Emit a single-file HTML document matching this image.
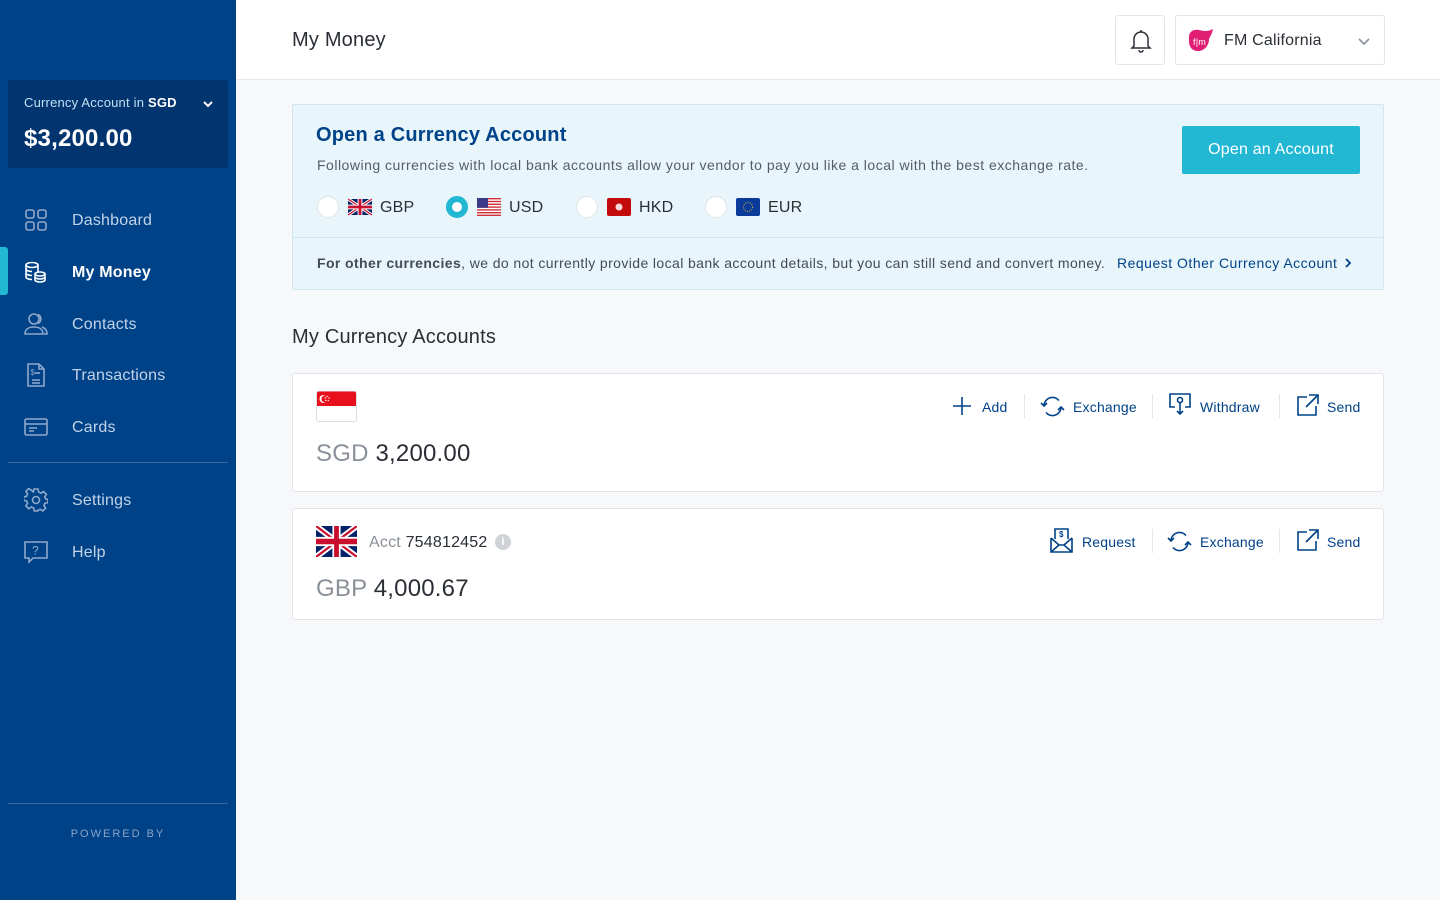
<!DOCTYPE html>
<html><head><meta charset="utf-8"><style>
*{box-sizing:border-box;margin:0;padding:0}
body{width:1440px;height:900px;font-family:"Liberation Sans",sans-serif;background:#f7f8fa;position:relative;overflow:hidden;color:#2a2f36;letter-spacing:.2px}
.sb{position:absolute;left:0;top:0;width:236px;height:900px;background:#004288}
.acc{position:absolute;left:8px;top:80px;width:220px;height:88px;background:#023570;border-radius:3px}
.acc .l{position:absolute;left:16px;top:15px;font-size:13px;color:#bfe0f2}
.acc .l b{color:#fff;font-weight:bold}
.acc .v{position:absolute;left:16px;top:45px;font-size:24px;color:#fff;font-weight:bold}
.nav{position:absolute;left:0;width:236px;height:50px;font-size:16px;color:#c2d3e8}
.nav span{position:absolute;left:72px;top:17px}
.nav svg{position:absolute;left:24px;top:13px}
.nav.act{color:#fff;font-weight:bold}
.nav.act:before{content:"";position:absolute;left:0;top:0;width:8px;height:48px;background:#22b7d3;border-radius:0 3px 3px 0}
.hr{position:absolute;left:8px;width:220px;height:1px;background:#3a6aa5}
.top{position:absolute;left:236px;top:0;width:1204px;height:80px;background:#fff;border-bottom:1px solid #e6e8eb}
.box{position:absolute;background:#fff;border:1px solid #e1e4e8;border-radius:3px}
.ban{position:absolute;left:292px;top:104px;width:1092px;height:186px;background:#e8f6fb;border:1px solid #d2e6ef;border-radius:2px}
.rad{position:absolute;top:91px;width:22px;height:22px;border-radius:50%;background:#fff;border:1px solid #dfe3e6}
.rad.on{background:#fff;border:6px solid #22b7d3}
.cur{position:absolute;top:94px;font-size:16px;color:#2a2f36}
.act2{position:absolute;font-size:14px;color:#004288}
.sep{position:absolute;width:1px;height:24px;background:#e5e7ea}
</style></head><body>
<div class="sb">
<div class="acc"><div class="l">Currency Account in <b>SGD</b></div>
<svg style="position:absolute;left:195px;top:21px" width="10" height="7" viewBox="0 0 10 7"><path d="M1 1l4 4 4-4" stroke="#fff" stroke-width="2" fill="none"/></svg>
<div class="v">$3,200.00</div></div>
<div class="nav" style="top:195px"><svg width="24" height="24" viewBox="0 0 24 24" fill="none" stroke="#8fa9cc" stroke-width="1.6"><rect x="2" y="2" width="8" height="8" rx="2"/><rect x="14" y="2" width="8" height="8" rx="2"/><rect x="2" y="14" width="8" height="8" rx="2"/><rect x="14" y="14" width="8" height="8" rx="2"/></svg><span>Dashboard</span></div>
<div class="nav act" style="top:247px"><svg width="24" height="24" viewBox="0 0 24 24" fill="none" stroke="#fff" stroke-width="1.6"><ellipse cx="8" cy="5" rx="6" ry="2.5"/><path d="M2 5v12c0 1.4 2.7 2.5 6 2.5M2 9c0 1.4 2.7 2.5 6 2.5M2 13c0 1.4 2.7 2.5 6 2.5M14 5v7"/><ellipse cx="16" cy="14" rx="5" ry="2"/><path d="M11 14v6c0 1.1 2.2 2 5 2s5-.9 5-2v-6M11 17c0 1.1 2.2 2 5 2s5-.9 5-2"/></svg><span style="top:17px">My Money</span></div>
<div class="nav" style="top:299px"><svg width="24" height="24" viewBox="0 0 24 24" fill="none" stroke="#8fa9cc" stroke-width="1.6"><circle cx="10" cy="7" r="5"/><path d="M1 22c0-5 4-7 9-7s9 2 9 7z"/><path d="M14 2.5a5 5 0 0 1 0 9M18 15c3 1 5 3 5 7h-3"/></svg><span>Contacts</span></div>
<div class="nav" style="top:350px"><svg width="24" height="24" viewBox="0 0 24 24" fill="none" stroke="#8fa9cc" stroke-width="1.6"><path d="M4 1h11l5 5v17H4z"/><path d="M15 1v5h5M8 17h8M8 20h8"/><text x="6.5" y="12" font-size="8" fill="#8fa9cc" stroke="none" font-family="Liberation Sans">$</text><path d="M11 10h5"/></svg><span>Transactions</span></div>
<div class="nav" style="top:402px"><svg width="24" height="24" viewBox="0 0 24 24" fill="none" stroke="#8fa9cc" stroke-width="1.6"><rect x="1" y="4" width="22" height="16" rx="1.5"/><path d="M1 9h22M5 13h8M5 16h5"/></svg><span>Cards</span></div>
<div class="hr" style="top:462px"></div>
<div class="nav" style="top:475px"><svg width="24" height="24" viewBox="0 0 24 24" fill="none" stroke="#8fa9cc" stroke-width="1.6"><circle cx="12" cy="12" r="3.5"/><path d="M10 1h4l.6 3 2.4 1.2 2.6-1.7 2.8 2.8-1.7 2.6L21.9 11l2 .4v3.2l-3 .6-1 2.4 1.7 2.6-2.8 2.8-2.6-1.7-2.4 1L13.7 23h-3.4l-.6-3-2.4-1-2.6 1.7-2.8-2.8 1.7-2.6-1-2.4-3-.6v-3.4l3-.6 1-2.4-1.7-2.6 2.8-2.8 2.6 1.7L9.4 4z"/></svg><span>Settings</span></div>
<div class="nav" style="top:527px"><svg width="24" height="24" viewBox="0 0 24 24" fill="none" stroke="#8fa9cc" stroke-width="1.6"><path d="M1 2h22v16H9l-4 4v-4H1z"/><text x="8" y="14.5" font-size="12" fill="#8fa9cc" stroke="none" font-family="Liberation Sans">?</text></svg><span>Help</span></div>
<div class="hr" style="top:803px"></div>
<div style="position:absolute;top:828px;width:236px;text-align:center;font-size:11px;letter-spacing:2px;color:#8ba3c6">POWERED BY</div>
</div>

<div class="top">
<div style="position:absolute;left:56px;top:29px;font-size:20px;color:#2a2f36">My Money</div>
<div class="box" style="left:879px;top:15px;width:50px;height:50px"><svg style="position:absolute;left:14px;top:13px" width="22" height="24" viewBox="0 0 22 24" fill="none" stroke="#2a2f36" stroke-width="1.5"><path d="M4 17V10a7 7 0 0 1 14 0v7l2 2H2z"/><path d="M11 1v2M9 21a2 2 0 0 0 4 0"/></svg></div>
<div class="box" style="left:939px;top:15px;width:210px;height:50px">
<svg style="position:absolute;left:10px;top:13px" width="28" height="24" viewBox="0 0 28 24"><path d="M3 8c0-5 4-8 10-7 5 1 8 2 14-1-1 5-3 8-4 10 0 7-5 12-11 12S3 18 3 12z" fill="#e01e74"/><text x="7" y="16" font-size="9" fill="#fff" font-family="Liberation Sans">f|m</text></svg>
<div style="position:absolute;left:48px;top:16px;font-size:16px;color:#2a2f36">FM California</div>
<svg style="position:absolute;left:182px;top:22px" width="12" height="8" viewBox="0 0 12 8"><path d="M1 1l5 5 5-5" stroke="#8a9099" stroke-width="1.6" fill="none"/></svg>
</div>
</div>

<div class="ban">
<div style="position:absolute;left:23px;top:19px;font-size:20px;font-weight:bold;color:#004288">Open a Currency Account</div>
<div style="position:absolute;left:24px;top:52px;font-size:14px;color:#555c66;letter-spacing:.5px">Following currencies with local bank accounts allow your vendor to pay you like a local with the best exchange rate.</div>
<div style="position:absolute;left:889px;top:21px;width:178px;height:48px;background:#22b7d3;border-radius:2px;color:#fff;font-size:16px;text-align:center;line-height:48px">Open an Account</div>
<div class="rad" style="left:24px"></div>
<svg style="position:absolute;left:55px;top:93px" width="24" height="18" viewBox="0 0 60 40"><rect width="60" height="40" fill="#012169"/><path d="M0 0l60 40M60 0L0 40" stroke="#fff" stroke-width="8"/><path d="M0 0l60 40M60 0L0 40" stroke="#c8102e" stroke-width="3"/><path d="M30 0v40M0 20h60" stroke="#fff" stroke-width="12"/><path d="M30 0v40M0 20h60" stroke="#c8102e" stroke-width="7"/></svg>
<div class="cur" style="left:87px">GBP</div>
<div class="rad on" style="left:153px"></div>
<svg style="position:absolute;left:184px;top:93px" width="24" height="18" viewBox="0 0 24 18"><rect width="24" height="18" rx="2" fill="#fff"/><g fill="#d0303a"><rect y="0" width="24" height="1.4"/><rect y="2.8" width="24" height="1.4"/><rect y="5.6" width="24" height="1.4"/><rect y="8.4" width="24" height="1.4"/><rect y="11.2" width="24" height="1.4"/><rect y="14" width="24" height="1.4"/><rect y="16.6" width="24" height="1.4"/></g><rect width="11" height="9.8" fill="#3b3b8a"/></svg>
<div class="cur" style="left:216px">USD</div>
<div class="rad" style="left:283px"></div>
<svg style="position:absolute;left:314px;top:93px" width="24" height="18" viewBox="0 0 24 18"><rect width="24" height="18" rx="2" fill="#c30b0b"/><circle cx="12" cy="9" r="3.5" fill="#fff" opacity=".85"/></svg>
<div class="cur" style="left:346px">HKD</div>
<div class="rad" style="left:412px"></div>
<svg style="position:absolute;left:443px;top:93px" width="24" height="18" viewBox="0 0 24 18"><rect width="24" height="18" rx="2" fill="#0a3a9a"/><circle cx="12" cy="9" r="4.5" fill="none" stroke="#d8b83a" stroke-width="1" stroke-dasharray="1 1.3"/></svg>
<div class="cur" style="left:475px">EUR</div>
<div style="position:absolute;left:0;top:132px;width:1090px;height:1px;background:#d2e6ef"></div>
<div style="position:absolute;left:24px;top:150px;font-size:14px;color:#444b55;letter-spacing:.4px"><b>For other currencies</b>, we do not currently provide local bank account details, but you can still send and convert money.</div>
<div style="position:absolute;left:824px;top:150px;font-size:14px;color:#004288;letter-spacing:.5px">Request Other Currency Account</div>
<svg style="position:absolute;left:1051px;top:152px" width="8" height="12" viewBox="0 0 8 12"><path d="M2 2l4 4-4 4" stroke="#004288" stroke-width="1.8" fill="none"/></svg>
</div>

<div style="position:absolute;left:292px;top:326px;font-size:20px;color:#2a2f36">My Currency Accounts</div>

<div class="box" style="left:292px;top:373px;width:1092px;height:119px">
<svg style="position:absolute;left:23px;top:17px" width="41" height="31" viewBox="0 0 41 31"><rect x=".5" y=".5" width="40" height="30" rx="2" fill="#fff" stroke="#ddd"/><path d="M1 2.5a2 2 0 0 1 2-2h35a2 2 0 0 1 2 2V15H1z" fill="#e8101c"/><circle cx="7.5" cy="8" r="4" fill="#fff"/><circle cx="9" cy="8" r="3.6" fill="#e8101c"/><g fill="#fff"><circle cx="11" cy="5.5" r=".7"/><circle cx="13" cy="7" r=".7"/><circle cx="12.3" cy="9.5" r=".7"/><circle cx="9.8" cy="9.5" r=".7"/><circle cx="9.2" cy="7" r=".7"/></g></svg>
<div style="position:absolute;left:23px;top:66px;font-size:24px"><span style="color:#8a9099">SGD</span> <span style="color:#2a2f36">3,200.00</span></div>
<svg style="position:absolute;left:659px;top:22px" width="20" height="20" viewBox="0 0 20 20"><path d="M10 1v18M1 10h18" stroke="#004288" stroke-width="1.6"/></svg>
<div class="act2" style="left:689px;top:25px">Add</div>
<div class="sep" style="left:731px;top:20px"></div>
<svg style="position:absolute;left:747px;top:20px" width="25" height="25" viewBox="0 0 25 25" fill="none" stroke="#004288" stroke-width="1.6"><path d="M4 11a8.5 8.5 0 0 1 15-4.5M21 14a8.5 8.5 0 0 1-15 4.5"/><path d="M1 9l3 3 3-3M24 16l-3-3-3 3"/></svg>
<div class="act2" style="left:780px;top:25px">Exchange</div>
<div class="sep" style="left:859px;top:20px"></div>
<svg style="position:absolute;left:875px;top:18px" width="24" height="25" viewBox="0 0 24 25" fill="none" stroke="#004288" stroke-width="1.6"><path d="M7 15H2V2h20v13h-5"/><circle cx="12" cy="8" r="2.5"/><path d="M12 11v11M9 19l3 3 3-3"/></svg>
<div class="act2" style="left:907px;top:25px">Withdraw</div>
<div class="sep" style="left:986px;top:20px"></div>
<svg style="position:absolute;left:1003px;top:20px" width="23" height="23" viewBox="0 0 23 23" fill="none" stroke="#004288" stroke-width="1.6"><path d="M11 3H2v18h18v-9M13 1h9v9M22 1L10 13"/></svg>
<div class="act2" style="left:1034px;top:25px">Send</div>
</div>

<div class="box" style="left:292px;top:508px;width:1092px;height:112px">
<svg style="position:absolute;left:23px;top:17px" width="41" height="31" viewBox="0 0 60 40" preserveAspectRatio="none"><rect width="60" height="40" fill="#012169"/><path d="M0 0l60 40M60 0L0 40" stroke="#fff" stroke-width="8"/><path d="M0 0l60 40M60 0L0 40" stroke="#c8102e" stroke-width="3"/><path d="M30 0v40M0 20h60" stroke="#fff" stroke-width="12"/><path d="M30 0v40M0 20h60" stroke="#c8102e" stroke-width="7"/></svg>
<div style="position:absolute;left:76px;top:25px;font-size:16px"><span style="color:#8a9099">Acct</span> <span style="color:#2a2f36">754812452</span></div>
<div style="position:absolute;left:202px;top:25px;width:16px;height:16px;border-radius:50%;background:#cfd3d8;color:#fff;font-size:11px;font-weight:bold;text-align:center;line-height:16px">i</div>
<div style="position:absolute;left:23px;top:66px;font-size:24px"><span style="color:#8a9099">GBP</span> <span style="color:#2a2f36">4,000.67</span></div>
<svg style="position:absolute;left:757px;top:19px" width="23" height="25" viewBox="0 0 23 25" fill="none" stroke="#004288" stroke-width="1.6"><path d="M5 11V1h13v10M1 10v14h21V10M1 24l8-7h5l8 7M1 10l8 7M22 10l-8 7"/><text x="9" y="9" font-size="8" fill="#004288" stroke="none" font-family="Liberation Sans" font-weight="bold">$</text></svg>
<div class="act2" style="left:789px;top:25px">Request</div>
<div class="sep" style="left:859px;top:20px"></div>
<svg style="position:absolute;left:874px;top:20px" width="25" height="25" viewBox="0 0 25 25" fill="none" stroke="#004288" stroke-width="1.6"><path d="M4 11a8.5 8.5 0 0 1 15-4.5M21 14a8.5 8.5 0 0 1-15 4.5"/><path d="M1 9l3 3 3-3M24 16l-3-3-3 3"/></svg>
<div class="act2" style="left:907px;top:25px">Exchange</div>
<div class="sep" style="left:986px;top:20px"></div>
<svg style="position:absolute;left:1003px;top:20px" width="23" height="23" viewBox="0 0 23 23" fill="none" stroke="#004288" stroke-width="1.6"><path d="M11 3H2v18h18v-9M13 1h9v9M22 1L10 13"/></svg>
<div class="act2" style="left:1034px;top:25px">Send</div>
</div>
</body></html>
